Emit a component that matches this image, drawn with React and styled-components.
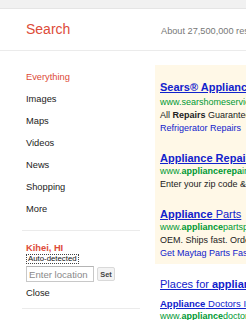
import React from "react"
import styled, { createGlobalStyle } from "styled-components"

const red = "#dd4b39"
const blue = "#1122cc"
const green = "#009933"

let GlobalStyle = createGlobalStyle`
    html, body {
        margin: 0;
        padding: 0;
        background: #fff;
        font-family: "Liberation Sans", Arial, sans-serif;
        overflow: hidden;
    }
`

let Page = styled.div`
    width: 246px;
    height: 320px;
    overflow: hidden;
`
let TopBar = styled.div`
    height: 8px;
    background-color: #f1f1f1;
    border-bottom: 1px solid #e5e5e5;
`
let Header = styled.div`
    height: 41px;
    display: flex;
    align-items: center;
    padding-left: 26px;
    border-bottom: 1px solid #ebebeb;
    white-space: nowrap;
`
let Title = styled.div`
    width: 135px;
    flex: none;
    color: ${red};
    font-size: 14px;
    padding-bottom: 1px;
`
let Stats = styled.div`
    color: #777;
    font-size: 9.2px;
    padding-top: 2px;
`
let Body = styled.div`
    display: flex;
    gap: 15px;
`
let Sidebar = styled.div`
    width: 118px;
    flex: none;
    margin-left: 22px;
    padding-top: 15px;
`
let NavItem = styled.div`
    padding-left: 4px;
    height: 22px;
    line-height: 22px;
    font-size: 9.3px;
    color: ${(props) => (props.active ? red : "#222")};
`
let Divider = styled.div`
    height: 1px;
    background-color: #ebebeb;
    margin-top: ${(props) => props.top || 0}px;
`
let Location = styled.div`
    padding: 12px 0 0 4px;
`
let Place = styled.div`
    color: ${red};
    font-weight: bold;
    font-size: 9.3px;
    line-height: 11px;
`
let Detected = styled.div`
    width: fit-content;
    border: 1px dotted #444;
    font-size: 7.8px;
    line-height: 8px;
    color: #111;
    padding: 0 1px;
`
let InputRow = styled.div`
    display: flex;
    align-items: center;
    gap: 3px;
    margin-top: 2px;
`
let LocationInput = styled.input`
    box-sizing: border-box;
    width: 68px;
    height: 16px;
    margin: 0;
    padding: 0 2px;
    border: 1px solid #c8c8c8;
    border-top-color: #b4b4b4;
    font-family: inherit;
    font-size: 9.6px;
    &::placeholder {
        color: #8a8a8a;
    }
`
let SetButton = styled.button`
    box-sizing: border-box;
    width: 18px;
    height: 14px;
    margin: 0;
    padding: 0;
    border: 1px solid #d9d9d9;
    border-radius: 2px;
    background-color: #f3f3f3;
    font-family: inherit;
    font-weight: bold;
    font-size: 7.4px;
    color: #444;
`
let CloseLink = styled.div`
    margin-top: 5px;
    font-size: 9.3px;
    line-height: 12px;
    color: #222;
`
let Results = styled.div`
    flex: 1;
    min-width: 0;
    white-space: nowrap;
    overflow: hidden;
`
let AdPanel = styled.div`
    margin-top: 14px;
    background-color: #fff8e7;
    padding: 15px 0 4px 5px;
    display: flex;
    flex-direction: column;
    gap: 16px;
`
let Ad = styled.div``
let AdTitle = styled.div`
    font-size: 11px;
    line-height: 14px;
    color: ${blue};
    text-decoration: underline;
    font-weight: ${(props) => (props.bold ? "bold" : "normal")};
`
let Url = styled.div`
    font-size: 9px;
    line-height: 13px;
    color: ${green};
    margin-top: ${(props) => props.top || 0}px;
`
let Line = styled.div`
    font-size: 9px;
    line-height: 13px;
    color: #222;
`
let SiteLink = styled.div`
    font-size: 9px;
    line-height: 13px;
    color: ${blue};
`
let Places = styled.div`
    margin-top: 13px;
    padding-left: 5px;
`
let PlaceLink = styled.div`
    margin-top: 6px;
    font-size: 9.5px;
    line-height: 13px;
    color: ${blue};
    text-decoration: underline;
`

let navItems = ["Everything", "Images", "Maps", "Videos", "News", "Shopping", "More"]

export default () => {
    return (
        <Page>
            <GlobalStyle />
            <TopBar />
            <Header>
                <Title>Search</Title>
                <Stats>About 27,500,000 results</Stats>
            </Header>
            <Body>
                <Sidebar>
                    {navItems.map((item, i) => (
                        <NavItem key={item} active={i === 0}>{item}</NavItem>
                    ))}
                    <Divider top={10} />
                    <Location>
                        <Place>Kihei, HI</Place>
                        <Detected>Auto-detected</Detected>
                        <InputRow>
                            <LocationInput placeholder="Enter location" />
                            <SetButton>Set</SetButton>
                        </InputRow>
                        <CloseLink>Close</CloseLink>
                    </Location>
                    <Divider top={9} />
                </Sidebar>
                <Results>
                    <AdPanel>
                        <Ad>
                            <AdTitle bold>Sears® Appliance Repair</AdTitle>
                            <Url top={2}>www.searshomeservices.com</Url>
                            <Line>All <b>Repairs</b> Guaranteed</Line>
                            <SiteLink>Refrigerator Repairs</SiteLink>
                        </Ad>
                        <Ad>
                            <AdTitle bold>Appliance Repair</AdTitle>
                            <Url>www.<b>appliancerepa</b>ir.com</Url>
                            <Line>Enter your zip code &amp; find</Line>
                        </Ad>
                        <Ad>
                            <AdTitle><b>Appliance</b> Parts</AdTitle>
                            <Url>www.<b>appliance</b>partspros.com</Url>
                            <Line>OEM. Ships fast. Order</Line>
                            <SiteLink>Get Maytag Parts Fast</SiteLink>
                        </Ad>
                    </AdPanel>
                    <Places>
                        <AdTitle>Places for <b>appliance repair</b></AdTitle>
                        <PlaceLink><b>Appliance</b> Doctors Inc</PlaceLink>
                        <Url>www.<b>appliance</b>doctors.com</Url>
                    </Places>
                </Results>
            </Body>
        </Page>
    )
}
